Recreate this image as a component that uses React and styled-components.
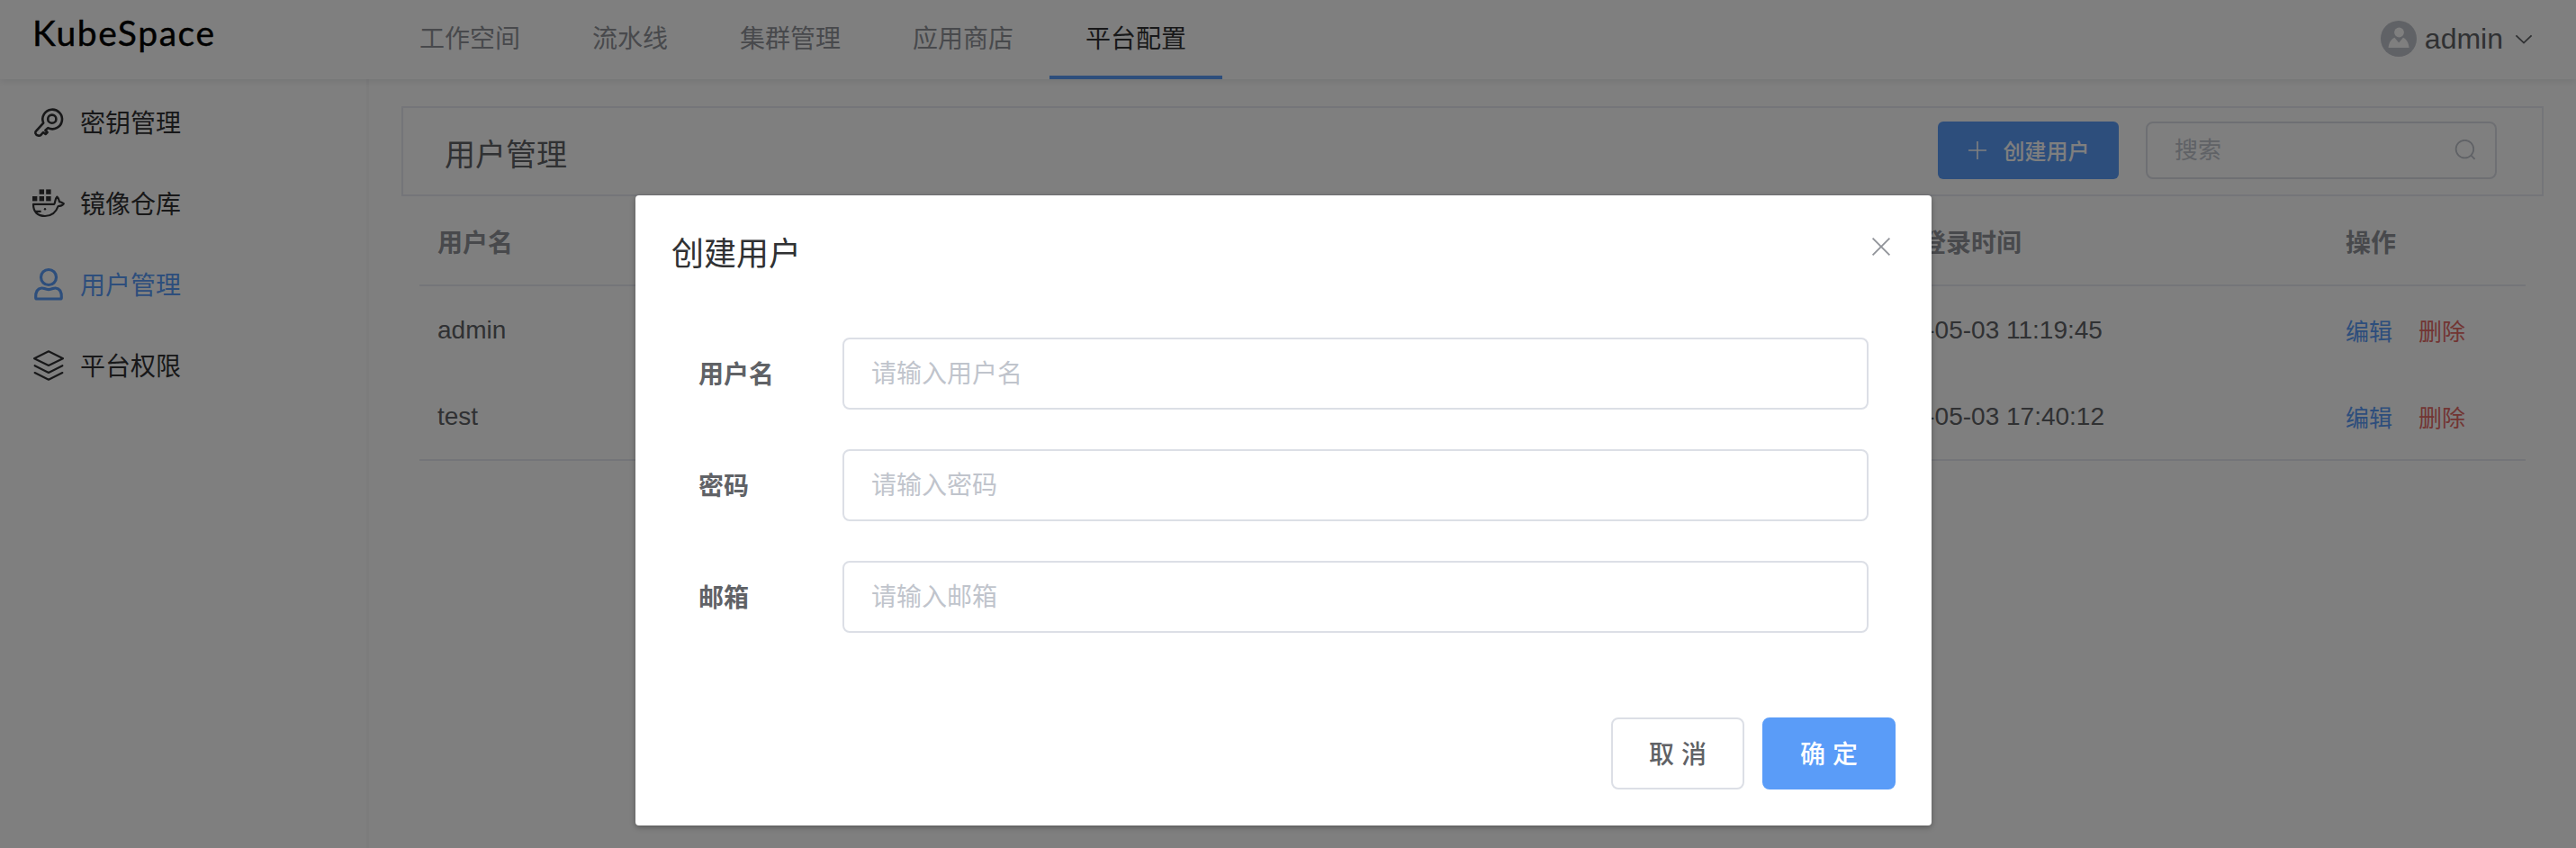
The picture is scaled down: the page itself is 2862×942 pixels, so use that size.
import React from 'react';
import styled, { createGlobalStyle } from 'styled-components';

const GlobalStyle = createGlobalStyle`
  * { box-sizing: border-box; }
  body {
    margin: 0;
    background: #fff;
    color: #606266;
    font-family: "Liberation Sans", "Noto Sans CJK SC", sans-serif;
    font-size: 28px;
  }
  button, input { font: inherit; }
`;

const Page = styled.div`
  position: relative;
  height: 942px;
  overflow: hidden;
  display: flex;
  flex-direction: column;
`;

const Header = styled.header`
  height: 88px;
  flex: none;
  display: flex;
  align-items: stretch;
  box-shadow: 0 2px 8px rgba(0, 21, 41, 0.1);
  position: relative;
`;

const Logo = styled.div`
  width: 426px;
  padding: 13px 0 0 36px;
  font-family: Lato, sans-serif;
  font-size: 39px;
  font-weight: 400;
  line-height: 46px;
  letter-spacing: 1.6px;
  -webkit-text-stroke: 0.4px #000;
  color: #000;
`;

const Nav = styled.nav`
  display: flex;
  flex: 1;
`;

const NavItem = styled.a`
  height: 88px;
  padding: 2px 40px 0;
  line-height: 84px;
  border-bottom: 4px solid ${(p) => (p.$active ? '#5a9cf8' : 'transparent')};
  color: ${(p) => (p.$active ? '#303133' : '#909399')};
`;

const Account = styled.div`
  display: flex;
  align-items: center;
  height: 86px;
  padding-right: 48px;
  font-size: 32px;
`;

const AccountName = styled.span`
  margin: 0 13px 0 9px;
`;

const Body = styled.div`
  flex: 1;
  display: flex;
`;

const Sidebar = styled.aside`
  width: 410px;
  border-right: 3px solid #f8f8f8;
  padding-top: 3px;
`;

const SideItem = styled.a`
  display: flex;
  align-items: center;
  height: 90px;
  padding-left: 34px;
  gap: 15px;
  color: ${(p) => (p.$active ? '#5a9cf8' : '#303133')};
  svg { flex: none; }
`;

const SideLabel = styled.span`
  padding-top: 3px;
  line-height: 40px;
`;

const Main = styled.main`
  flex: 1;
  padding: 30px 36px 0;
`;

const Toolbar = styled.div`
  height: 100px;
  border: 2px solid #e8eaf2;
  padding: 0 50px 0 46px;
  display: flex;
  align-items: center;
`;

const PageTitle = styled.h1`
  margin: 8px auto 0 0;
  font-size: 34px;
  font-weight: 400;
  line-height: 48px;
`;

const CreateButton = styled.button`
  width: 201px;
  height: 64px;
  margin: 0 30px 2px 0;
  border: 0;
  border-radius: 6px;
  background: #5a9cf8;
  color: #fff;
  font-size: 24px;
  font-weight: 500;
  display: flex;
  align-items: center;
  justify-content: center;
  gap: 18px;
  padding: 0 0 1px;
`;

const Search = styled.label`
  width: 390px;
  height: 64px;
  margin-bottom: 2px;
  border: 2px solid #dcdfe6;
  border-radius: 8px;
  display: flex;
  align-items: center;
  padding: 0 21px 0 30px;
`;

const SearchInput = styled.input`
  flex: 1;
  min-width: 0;
  border: 0;
  padding: 1px 0 0;
  outline: 0;
  background: none;
  font-size: 26px;
  &::placeholder { color: #c0c4cc; opacity: 1; }
`;

const Table = styled.div`
  margin: 0 20px;
`;

const Row = styled.div`
  display: grid;
  grid-template-columns: 800px 792px 528px 1fr;
  align-items: center;
  height: ${(p) => (p.$head ? 100 : 97)}px;
  padding: ${(p) => (p.$head ? 1 : 0)}px 0 0 20px;
  border-bottom: ${(p) => (p.$line ? '2px solid #e8eaf2' : '0')};
  color: ${(p) => (p.$head ? '#909399' : '#606266')};
  font-weight: ${(p) => (p.$head ? 700 : 400)};
`;

const Actions = styled.div`
  display: flex;
  gap: 29px;
  font-size: 26px;
`;

const Action = styled.a`
  color: ${(p) => (p.$danger ? '#e56a66' : '#5a9cf8')};
`;

const Overlay = styled.div`
  position: absolute;
  inset: 0;
  background: rgba(0, 0, 0, 0.5);
  display: flex;
  justify-content: center;
  align-items: flex-start;
  padding: 217px 10px 0 0;
`;

const Dialog = styled.section`
  width: 1440px;
  height: 700px;
  background: #fff;
  border-radius: 4px;
  box-shadow: 0 2px 6px rgba(0, 0, 0, 0.3);
  display: flex;
  flex-direction: column;
`;

const DialogHeader = styled.div`
  height: 158px;
  padding: 40px 45px 0 40px;
  display: flex;
  justify-content: space-between;
  align-items: flex-start;
  svg { margin-top: 6px; }
`;

const DialogTitle = styled.h2`
  margin: 2px 0 0;
  font-size: 36px;
  font-weight: 400;
  line-height: 48px;
  color: #303133;
`;

const Form = styled.form`
  padding: 0 70px;
  flex: 1;
  display: flex;
  flex-direction: column;
  gap: 44px;
`;

const Field = styled.label`
  display: flex;
  height: 80px;
  align-items: center;
`;

const FieldName = styled.span`
  width: 160px;
  padding-bottom: 2px;
  font-weight: 700;
`;

const FieldInput = styled.input`
  flex: 1;
  height: 80px;
  border: 2px solid #dcdfe6;
  border-radius: 8px;
  padding: 2px 30px 0;
  outline: 0;
  background: #fff;
  &::placeholder { color: #c0c4cc; opacity: 1; }
`;

const DialogFooter = styled.div`
  display: flex;
  justify-content: flex-end;
  gap: 20px;
  padding: 0 40px 40px;
`;

const DialogButton = styled.button`
  width: 148px;
  height: 80px;
  padding: 0 0 2px;
  border: 2px solid ${(p) => (p.$primary ? '#5a9cf8' : '#dcdfe6')};
  border-radius: 8px;
  background: ${(p) => (p.$primary ? '#5a9cf8' : '#fff')};
  color: ${(p) => (p.$primary ? '#fff' : '#606266')};
  font-weight: 500;
`;

const sideIcon = { width: 40, height: 40, viewBox: '0 0 40 40', fill: 'none', stroke: 'currentColor' };

const KeyIcon = () => (
  <svg {...sideIcon} strokeWidth="2.6" strokeLinejoin="round" strokeLinecap="round">
    <circle cx="23.8" cy="16.2" r="4.6" />
    <path d="M14.2 20.6 A10.8 10.8 0 1 1 19.3 26.1 L16.4 28.8 L18.6 31 L16.6 33 L14 31 L11.5 33.8 C10 35.5 6.2 34.6 5.4 32.2 C5 30.8 5.8 29.6 7 28.6 Z" />
  </svg>
);

const DockerIcon = () => (
  <svg {...sideIcon} strokeWidth="2.2" strokeLinejoin="round">
    <g fill="currentColor" stroke="none">
      <rect x="9.6" y="4.4" width="5.4" height="5.4" />
      <rect x="17.2" y="4.4" width="5.4" height="5.4" />
      <rect x="2" y="12" width="5.4" height="5.4" />
      <rect x="9.6" y="12" width="5.4" height="5.4" />
      <rect x="17.2" y="12" width="5.4" height="5.4" />
      <circle cx="16" cy="26.2" r="1.2" />
    </g>
    <path d="M3 20.8 H26.2 C27.8 19.2 26.4 15.6 29.4 12.6 C31.6 14.4 31.4 16.4 32 18.2 C33.6 18.4 35 19 36.8 20.2 C35 22.4 33 23 30.6 23 C28 30.6 23.4 34 16 34 C7.6 34 3 29.4 3 20.8 Z M5 28.8 H11.6" />
  </svg>
);

const UserIcon = () => (
  <svg {...sideIcon} strokeWidth="3.2" strokeLinejoin="round">
    <circle cx="20" cy="12" r="8.5" />
    <path d="M5.7 34.4 C5.5 28 7.6 24.4 12.4 24 C14.6 23.8 16.2 25.6 20 25.6 C23.8 25.6 25.4 23.8 27.6 24 C32.4 24.4 34.5 28 34.3 34.4 C34.3 35.4 33.8 36 32.8 36 H7.2 C6.2 36 5.7 35.4 5.7 34.4 Z" />
  </svg>
);

const LayersIcon = () => (
  <svg {...sideIcon} strokeWidth="2.1" strokeLinejoin="round" strokeLinecap="round">
    <path d="M20 4.2 L36 12.2 L20 20 L4 12.2 Z" />
    <path d="M4.6 20.2 L20 28 L35.4 20.2" />
    <path d="M4.6 28 L20 35.8 L35.4 28" />
  </svg>
);

const AvatarIcon = () => (
  <svg width="40" height="40" viewBox="0 0 40 40">
    <circle cx="20" cy="20" r="20" fill="#c0c4cc" />
    <circle cx="20.5" cy="13" r="5.4" fill="#fff" />
    <path d="M8.6 30 C9 24.6 11.6 20.6 15.4 18.8 L20.2 24.6 L25 18.8 C28.8 20.6 31 24.6 31.6 30 Z" fill="#fff" />
  </svg>
);

const ChevronIcon = () => (
  <svg width="20" height="14" viewBox="0 0 20 14" fill="none" stroke="#606266" strokeWidth="1.8">
    <path d="M1.4 3.4 L10 11.6 L18.6 3.4" />
  </svg>
);

const PlusIcon = () => (
  <svg width="22" height="22" viewBox="0 0 22 22" stroke="#fff" strokeWidth="1.6">
    <path d="M1 11 H21 M11 1 V21" />
  </svg>
);

const SearchIcon = () => (
  <svg width="24" height="24" viewBox="0 0 24 24" fill="none" stroke="#c0c4cc" strokeWidth="1.8">
    <circle cx="11.4" cy="10.6" r="9.8" />
    <path d="M18.4 17.6 L22.6 21.8" />
  </svg>
);

const CloseIcon = () => (
  <svg width="22" height="22" viewBox="0 0 22 22" stroke="#909399" strokeWidth="1.8">
    <path d="M1.6 1.6 L20.4 20.4 M20.4 1.6 L1.6 20.4" />
  </svg>
);

const navItems = ['工作空间', '流水线', '集群管理', '应用商店', '平台配置'];

const sideItems = [
  { label: '密钥管理', Icon: KeyIcon },
  { label: '镜像仓库', Icon: DockerIcon },
  { label: '用户管理', Icon: UserIcon, active: true },
  { label: '平台权限', Icon: LayersIcon },
];

const users = [
  { name: 'admin', lastLogin: '2022-05-03 11:19:45' },
  { name: 'test', lastLogin: '2022-05-03 17:40:12' },
];

const fields = [
  { label: '用户名', placeholder: '请输入用户名' },
  { label: '密码', placeholder: '请输入密码' },
  { label: '邮箱', placeholder: '请输入邮箱' },
];

export default function App() {
  return (
    <Page>
      <GlobalStyle />
      <Header>
        <Logo>KubeSpace</Logo>
        <Nav>
          {navItems.map((item) => (
            <NavItem key={item} $active={item === '平台配置'}>{item}</NavItem>
          ))}
        </Nav>
        <Account>
          <AvatarIcon />
          <AccountName>admin</AccountName>
          <ChevronIcon />
        </Account>
      </Header>
      <Body>
        <Sidebar>
          {sideItems.map(({ label, Icon, active }) => (
            <SideItem key={label} $active={active}>
              <Icon />
              <SideLabel>{label}</SideLabel>
            </SideItem>
          ))}
        </Sidebar>
        <Main>
          <Toolbar>
            <PageTitle>用户管理</PageTitle>
            <CreateButton><PlusIcon />创建用户</CreateButton>
            <Search>
              <SearchInput placeholder="搜索" />
              <SearchIcon />
            </Search>
          </Toolbar>
          <Table>
            <Row $head $line>
              <span>用户名</span>
              <span />
              <span>最近登录时间</span>
              <span>操作</span>
            </Row>
            {users.map((user, i) => (
              <Row key={user.name} $line={i === users.length - 1}>
                <span>{user.name}</span>
                <span />
                <span>{user.lastLogin}</span>
                <Actions>
                  <Action>编辑</Action>
                  <Action $danger>删除</Action>
                </Actions>
              </Row>
            ))}
          </Table>
        </Main>
      </Body>
      <Overlay>
        <Dialog>
          <DialogHeader>
            <DialogTitle>创建用户</DialogTitle>
            <CloseIcon />
          </DialogHeader>
          <Form>
            {fields.map((field) => (
              <Field key={field.label}>
                <FieldName>{field.label}</FieldName>
                <FieldInput placeholder={field.placeholder} />
              </Field>
            ))}
          </Form>
          <DialogFooter>
            <DialogButton>取 消</DialogButton>
            <DialogButton $primary>确 定</DialogButton>
          </DialogFooter>
        </Dialog>
      </Overlay>
    </Page>
  );
}
